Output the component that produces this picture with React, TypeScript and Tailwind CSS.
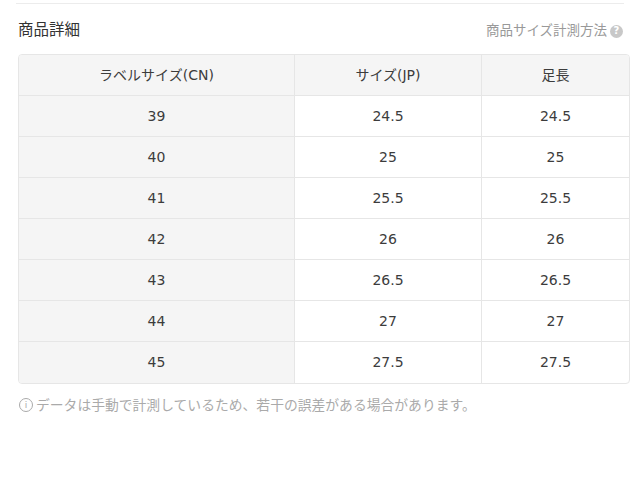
import React from "react";

const rows: [string, string, string][] = [
  ["39", "24.5", "24.5"],
  ["40", "25", "25"],
  ["41", "25.5", "25.5"],
  ["42", "26", "26"],
  ["43", "26.5", "26.5"],
  ["44", "27", "27"],
  ["45", "27.5", "27.5"],
];

export default function App() {
  return (
    <div
      className="w-[640px] h-[486px] bg-white text-[#3c3c3c]"
      style={{ fontFamily: '"DejaVu Sans", "Noto Sans CJK JP", sans-serif' }}
    >
      <div className="pt-[3px] pl-[16px] pr-[16px]">
        <div className="h-px bg-[#ececec]" />
      </div>
      <div className="pl-[18px] pr-[10px]">
        <div className="flex items-center justify-between h-[50px] pr-[7px]">
          <div className="text-[15.5px] text-[#333] leading-none mt-[4px]">商品詳細</div>
          <div className="flex items-center gap-[3px] text-[13.5px] text-[#999] leading-none mt-[4px]">
            <span>商品サイズ計測方法</span>
            <span className="w-[13px] h-[13px] rounded-full bg-[#c8c8c8] text-white text-[10px] font-bold flex items-center justify-center">
              ?
            </span>
          </div>
        </div>
        <div className="w-[612px] border border-[#e6e6e6] rounded-[4px] overflow-hidden">
          <div className="grid grid-cols-[276px_187px_1fr] h-[41px] bg-[#f5f5f5] border-b border-[#e6e6e6] text-[14px]">
            <div className="flex items-center justify-center border-r border-[#e6e6e6]">ラベルサイズ(CN)</div>
            <div className="flex items-center justify-center border-r border-[#e6e6e6]">サイズ(JP)</div>
            <div className="flex items-center justify-center">足長</div>
          </div>
          {rows.map((r, i) => (
            <div
              key={r[0]}
              className={`grid grid-cols-[276px_187px_1fr] h-[41px] text-[14px] ${
                i < rows.length - 1 ? "border-b border-[#e6e6e6]" : ""
              }`}
            >
              <div className="flex items-center justify-center bg-[#f5f5f5] border-r border-[#e6e6e6]">{r[0]}</div>
              <div className="flex items-center justify-center border-r border-[#e6e6e6]">{r[1]}</div>
              <div className="flex items-center justify-center">{r[2]}</div>
            </div>
          ))}
        </div>
        <div className="mt-[14px] flex items-center text-[13.8px] text-[#aaa] leading-none">
          <span className="w-[14px] h-[14px] rounded-full border border-[#aaa] text-[9px] flex items-center justify-center mr-[3px] ml-[1px]">
            i
          </span>
          <span style={{ fontFamily: '"Noto Sans CJK JP", sans-serif' }}>
            データは手動で計測しているため、若干の誤差がある場合があります。
          </span>
        </div>
      </div>
    </div>
  );
}
